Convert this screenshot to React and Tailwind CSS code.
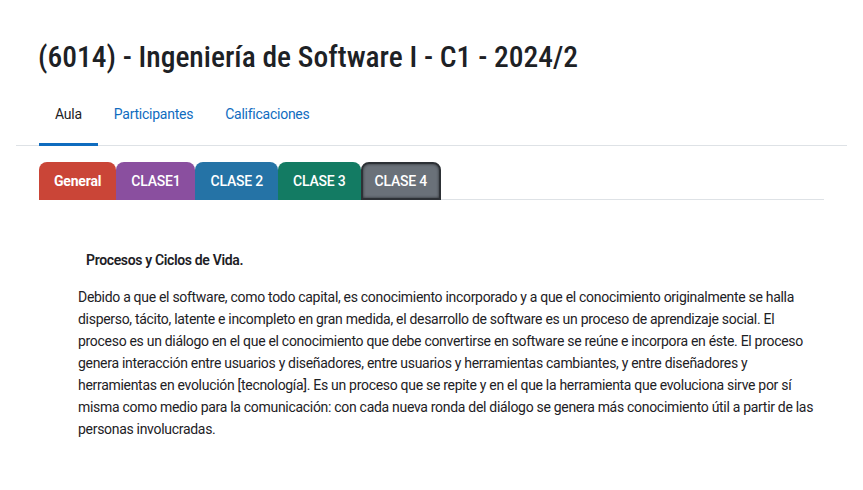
import React, { useState } from "react";

const tabs = [
  { name: "General", cls: "bg-[#ca4537] font-bold px-[15px]" },
  { name: "CLASE1", cls: "bg-[#8a4f9f] font-medium px-[15px]" },
  { name: "CLASE 2", cls: "bg-[#2573a6] font-medium px-[15px]" },
  { name: "CLASE 3", cls: "bg-[#137b63] font-medium px-[15px]" },
  {
    name: "CLASE 4",
    cls: "bg-[#6a7179] font-medium px-[12px] pt-px border-2 border-[#2d3136] shadow-[inset_0_0_3px_rgba(0,0,0,0.6)]",
  },
];

export default function App() {
  const [active, setActive] = useState("Aula");

  return (
    <div className="min-h-screen bg-white px-4 pt-[39px] font-['Roboto',sans-serif] text-[#1d2125]">
      <h1 className="pl-[22px] text-[29.5px] font-medium leading-[36px] font-stretch-[81%]">
        (6014) - Ingeniería de Software I - C1 - 2024/2
      </h1>

      {/* nav */}
      <ul className="mt-[22px] flex border-b border-[#dee2e6] pl-[23px] text-[14px] tracking-[-0.25px]">
        {["Aula", "Participantes", "Calificaciones"].map((t) => (
          <li key={t}>
            <button
              onClick={() => setActive(t)}
              className={`px-4 pt-[7px] pb-[18px] border-b-[3px] -mb-px ${
                active === t
                  ? "border-[#0f6cbf] text-[#1d2125]"
                  : "border-transparent text-[#0f6cbf]"
              }`}
            >
              {t}
            </button>
          </li>
        ))}
      </ul>

      {/* class tabs */}
      <div className="mx-[23px] mt-[16px] flex items-end border-b border-[#dee2e6]">
        {tabs.map((t) => (
          <div
            key={t.name}
            className={`flex h-[38px] -mb-px items-center rounded-t-[8px] text-[14px] tracking-[-0.2px] text-white ${t.cls}`}
          >
            {t.name}
          </div>
        ))}
      </div>

      {/* content */}
      <div className="pl-[62px] pr-[30px] pt-[49px] text-[14px] leading-[22px]">
        <p className="pl-2 font-semibold tracking-[-0.35px]">
          Procesos y Ciclos de Vida.
        </p>
        <p className="mt-[15px] tracking-[-0.3px]">
          Debido a que el software, como todo capital, es conocimiento
          incorporado y a que el conocimiento originalmente se halla disperso,
          tácito, latente e incompleto en gran medida, el desarrollo de software
          es un proceso de aprendizaje social. El proceso es un diálogo en el
          que el conocimiento que debe convertirse en software se reúne e
          incorpora en éste. El proceso genera interacción entre usuarios y
          diseñadores, entre usuarios y herramientas cambiantes, y entre
          diseñadores y herramientas en evolución [tecnología]. Es un proceso
          que se repite y en el que la herramienta que evoluciona sirve por sí
          misma como medio para la comunicación: con cada nueva ronda del
          diálogo se genera más conocimiento útil a partir de las personas
          involucradas.
        </p>
      </div>
    </div>
  );
}
